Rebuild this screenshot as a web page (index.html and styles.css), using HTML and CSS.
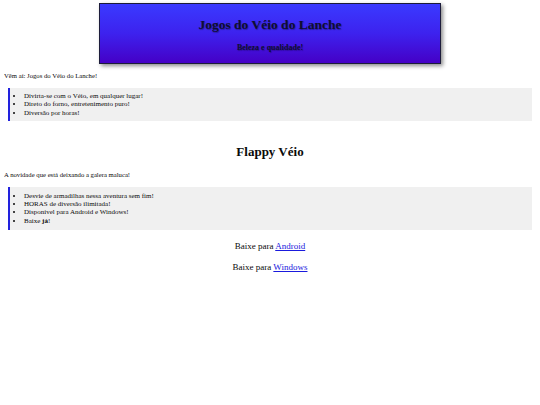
FILE: index.html
```html
<!DOCTYPE html>
<html lang="pt-BR">
<head>
<meta charset="utf-8">
<title>Jogos do Véio do Lanche</title>
<link rel="stylesheet" href="styles.css">
</head>
<body>
<header class="banner">
  <h1 class="banner-title">Jogos do Véio do Lanche</h1>
  <p class="banner-sub">Beleza e qualidade!</p>
</header>
<p class="intro">Vêm aí: Jogos do Véio do Lanche!</p>
<div class="callout callout-first">
  <ul class="feature-list">
    <li>Divirta-se com o Véio, em qualquer lugar!</li>
    <li>Direto do forno, entretenimento puro!</li>
    <li>Diversão por horas!</li>
  </ul>
</div>
<h2 class="game-title">Flappy Véio</h2>
<p class="intro intro-game">A novidade que está deixando a galera maluca!</p>
<div class="callout callout-second">
  <ul class="feature-list">
    <li>Desvie de armadilhas nessa aventura sem fim!</li>
    <li>HORAS de diversão ilimitada!</li>
    <li>Disponível para Android e Windows!</li>
    <li>Baixe <strong>já</strong>!</li>
  </ul>
</div>
<p class="download download-first">Baixe para <a href="#">Android</a></p>
<p class="download download-second">Baixe para <a href="#">Windows</a></p>
</body>
</html>
```
FILE: styles.css
```css
html, body {
  background: #ffffff;
}
body {
  margin: 0 4px;
  font-family: "Liberation Serif", "Times New Roman", serif;
  color: #0a0a0a;
}
.banner {
  box-sizing: border-box;
  width: 342px;
  margin: 3px auto 0;
  padding: 12.5px 0 10px;
  border: 1.5px solid #1c1c3a;
  background: linear-gradient(to bottom, #3a3aff 0%, #3d22ee 50%, #4500c6 100%);
  box-shadow: 2px 2px 4px rgba(0, 0, 0, 0.45);
  text-align: center;
  color: #0e0e30;
}
.banner-title {
  margin: 0;
  font-size: 13.5px;
  line-height: 16px;
  font-weight: bold;
  text-shadow: 0.5px 0.5px 1px rgba(0, 0, 0, 0.35);
}
.banner-sub {
  margin: 10.5px 0 0;
  font-size: 8px;
  line-height: 10px;
  font-weight: bold;
  text-shadow: 0.5px 0.5px 1px rgba(0, 0, 0, 0.3);
}
.intro {
  margin: 8px 0 0;
  font-size: 6.7px;
  line-height: 8px;
}
.intro-game {
  margin-top: 11px;
}
.callout {
  margin: 8px 4px 0;
  padding: 4px 0;
  background: #f0f0f0;
  border-left: 2px solid #2222dd;
}
.callout-second {
  margin-top: 8px;
  padding: 5px 0;
}
.feature-list {
  margin: 0;
  padding-left: 14px;
  font-size: 7px;
  line-height: 8.3px;
}
.game-title {
  margin: 23px 0 0;
  font-size: 13px;
  line-height: 16px;
  font-weight: bold;
  text-align: center;
}
.download {
  margin: 11.3px 0 0;
  font-size: 9px;
  line-height: 11px;
  text-align: center;
}
.download-second {
  margin-top: 10px;
}
.download a {
  color: #1a1add;
}
```
